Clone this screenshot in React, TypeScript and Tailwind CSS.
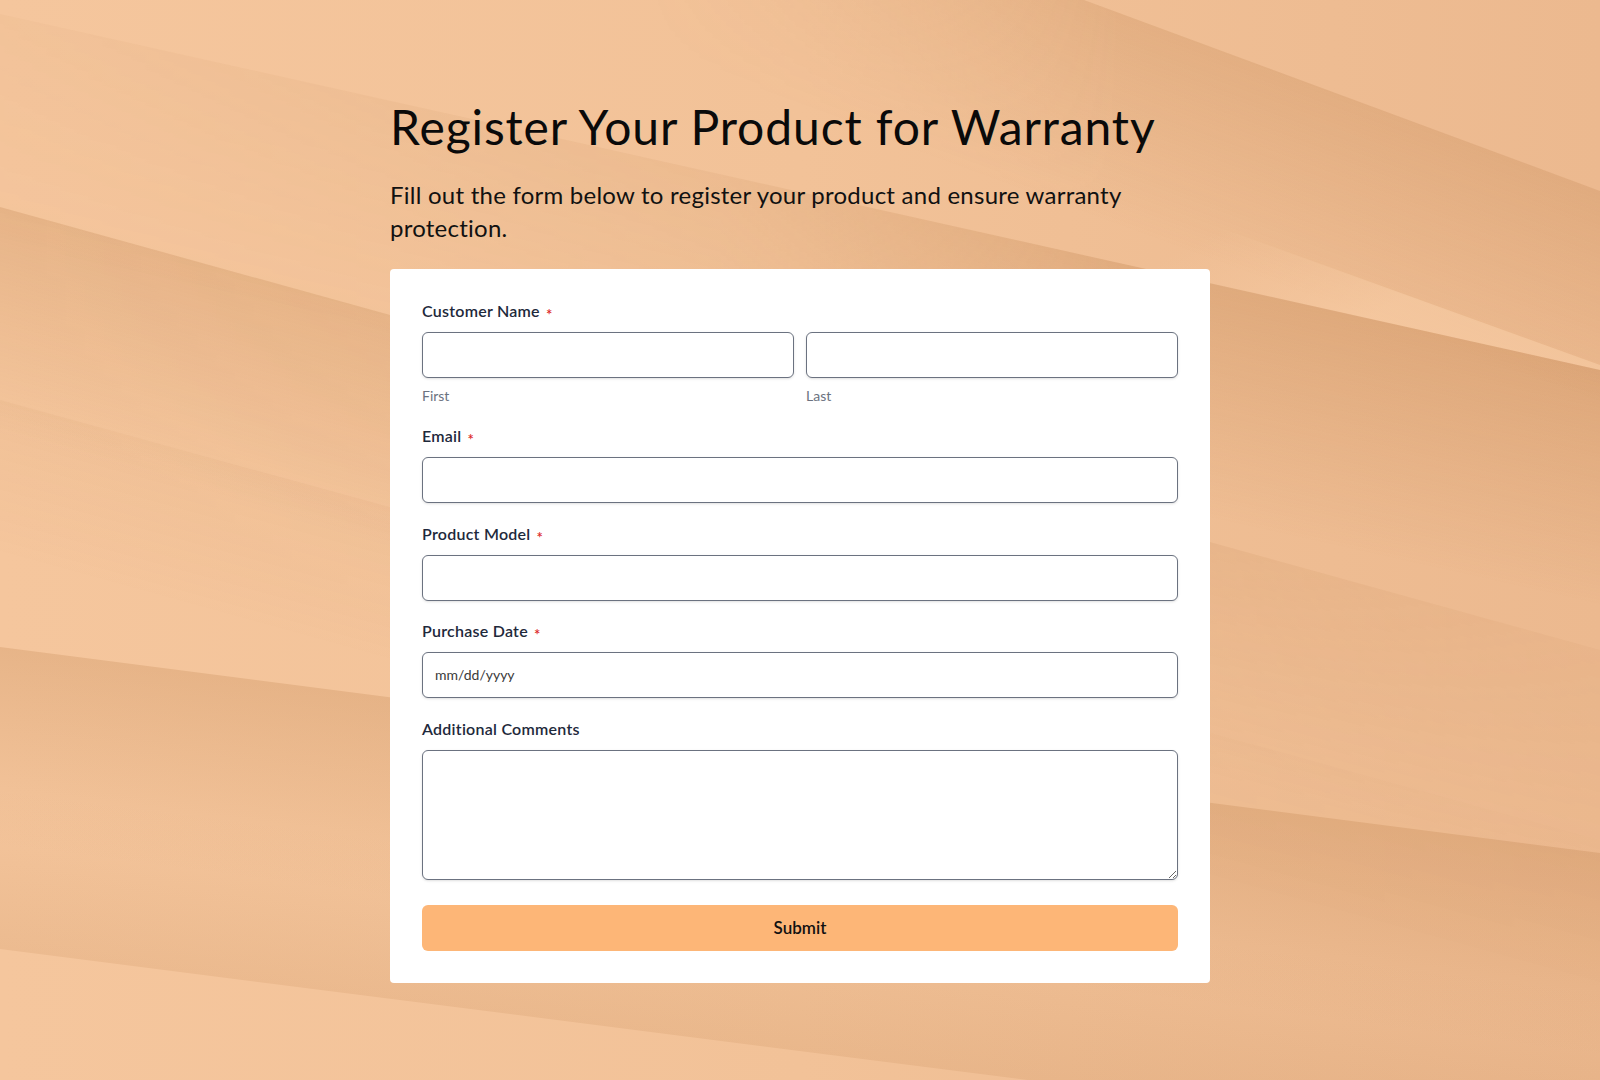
import React from "react";

function Background() {
  const dark = "#b5763f";
  return (
    <svg
      className="absolute inset-0 h-full w-full"
      viewBox="0 0 1600 1080"
      preserveAspectRatio="none"
      aria-hidden="true"
    >
      <defs>
        <linearGradient id="base" x1="0" y1="0" x2="1600" y2="0" gradientUnits="userSpaceOnUse">
          <stop offset="0" stopColor="#f5c69d" />
          <stop offset="0.5" stopColor="#f2c298" />
          <stop offset="1" stopColor="#ecb98f" />
        </linearGradient>
        <linearGradient id="fadeLeft" x1="0" y1="0" x2="1600" y2="0" gradientUnits="userSpaceOnUse">
          <stop offset="0" stopColor="#fff" stopOpacity="0.15" />
          <stop offset="0.45" stopColor="#fff" stopOpacity="0.35" />
          <stop offset="0.72" stopColor="#fff" stopOpacity="1" />
          <stop offset="1" stopColor="#fff" stopOpacity="1" />
        </linearGradient>
        <linearGradient id="fadeRightSoft" x1="0" y1="0" x2="1600" y2="0" gradientUnits="userSpaceOnUse">
          <stop offset="0" stopColor="#fff" stopOpacity="1" />
          <stop offset="0.3" stopColor="#fff" stopOpacity="0.9" />
          <stop offset="1" stopColor="#fff" stopOpacity="0.25" />
        </linearGradient>
        <linearGradient id="fadeTR" x1="0" y1="0" x2="1600" y2="0" gradientUnits="userSpaceOnUse">
          <stop offset="0.4" stopColor="#fff" stopOpacity="0" />
          <stop offset="0.7" stopColor="#fff" stopOpacity="1" />
          <stop offset="1" stopColor="#fff" stopOpacity="1" />
        </linearGradient>
        <mask id="mLeft" maskUnits="userSpaceOnUse" x="0" y="0" width="1600" height="1080">
          <rect x="0" y="0" width="1600" height="1080" fill="url(#fadeLeft)" />
        </mask>
        <mask id="mRight" maskUnits="userSpaceOnUse" x="0" y="0" width="1600" height="1080">
          <rect x="0" y="0" width="1600" height="1080" fill="url(#fadeRightSoft)" />
        </mask>
        <mask id="mTR" maskUnits="userSpaceOnUse" x="0" y="0" width="1600" height="1080">
          <rect x="0" y="0" width="1600" height="1080" fill="url(#fadeTR)" />
        </mask>
        <linearGradient id="g1" x1="1342" y1="95" x2="1273" y2="283" gradientUnits="userSpaceOnUse">
          <stop offset="0" stopColor={dark} stopOpacity="0.2" />
          <stop offset="1" stopColor={dark} stopOpacity="0" />
        </linearGradient>
        <linearGradient id="g2" x1="1400" y1="325" x2="1350" y2="550" gradientUnits="userSpaceOnUse">
          <stop offset="0" stopColor={dark} stopOpacity="0.26" />
          <stop offset="1" stopColor={dark} stopOpacity="0" />
        </linearGradient>
        <linearGradient id="g2l" x1="1400" y1="300" x2="1330" y2="170" gradientUnits="userSpaceOnUse">
          <stop offset="0" stopColor="#fbd2ab" stopOpacity="0.5" />
          <stop offset="1" stopColor="#fbd2ab" stopOpacity="0" />
        </linearGradient>
        <linearGradient id="g3" x1="200" y1="262" x2="141" y2="474" gradientUnits="userSpaceOnUse">
          <stop offset="0" stopColor={dark} stopOpacity="0.22" />
          <stop offset="1" stopColor={dark} stopOpacity="0" />
        </linearGradient>
        <linearGradient id="g4" x1="200" y1="455" x2="160" y2="600" gradientUnits="userSpaceOnUse">
          <stop offset="0" stopColor={dark} stopOpacity="0.06" />
          <stop offset="1" stopColor={dark} stopOpacity="0" />
        </linearGradient>
        <linearGradient id="g5" x1="800" y1="750" x2="774" y2="948" gradientUnits="userSpaceOnUse">
          <stop offset="0" stopColor={dark} stopOpacity="0.22" />
          <stop offset="1" stopColor={dark} stopOpacity="0" />
        </linearGradient>
        <linearGradient id="g6" x1="800" y1="1051" x2="820" y2="892" gradientUnits="userSpaceOnUse">
          <stop offset="0" stopColor={dark} stopOpacity="0.14" />
          <stop offset="1" stopColor={dark} stopOpacity="0" />
        </linearGradient>
      </defs>
      <rect x="0" y="0" width="1600" height="1080" fill="url(#base)" />
      {/* top right plane below line L1 */}
      <g mask="url(#mTR)">
        <polygon points="400,0 1084,0 1600,191 1600,480 400,200" fill="url(#g1)" />
      </g>
      {/* light sliver above L2 on the right */}
      <polygon points="1050,166 1600,365 1600,370 1050,248" fill="url(#g2l)" />
      {/* long plane below L2 */}
      <g mask="url(#mLeft)">
        <polygon points="0,14 1600,370 1600,720 0,364" fill="url(#g2)" />
      </g>
      {/* plane below L3 */}
      <g mask="url(#mRight)">
        <polygon points="0,207 1600,650 1600,900 0,457" fill="url(#g3)" />
        <polygon points="0,400 1600,840 1600,1000 0,560" fill="url(#g4)" />
      </g>
      {/* plane below L5 */}
      <polygon points="0,647 1600,853 1600,1080 0,897" fill="url(#g5)" />
      {/* fold above L6 */}
      <polygon points="0,790 1600,994 1600,1153 0,949" fill="url(#g6)" />
    </svg>
  );
}

function Req() {
  return (
    <span className="relative top-[4px] ml-[6px] text-[15px] leading-none text-[#dc2626]">*</span>
  );
}

function Label({ children, required }: { children: React.ReactNode; required?: boolean }) {
  return (
    <div className="mb-[11px] flex items-center text-[16px] leading-[20px] font-semibold tracking-[0.25px] text-[#1e293b]">
      <span>{children}</span>
      {required && <Req />}
    </div>
  );
}

const inputCls =
  "block h-[46px] w-full rounded-md border border-[#6b7280] bg-white px-3 text-[14px] text-[#1f2937] shadow-sm outline-none";

export default function App() {
  return (
    <div
      className="relative min-h-screen w-full overflow-hidden"
      style={{ fontFamily: "Lato, 'Noto Sans', 'Liberation Sans', sans-serif" }}
    >
      <Background />
      <div className="relative mx-auto w-[820px] pt-[98px] pb-[97px]">
        <h1 className="mb-[22px] text-[48px] leading-[1.2] font-normal tracking-[0.9px] text-[#0a0a0a]">
          Register Your Product for Warranty
        </h1>
        <p className="mb-[24px] text-[24px] leading-[1.4] tracking-[0.24px] text-[#111111]">
          Fill out the form below to register your product and ensure warranty protection.
        </p>
        <form className="rounded bg-white p-8" onSubmit={(e) => e.preventDefault()}>
          <div>
            <Label required>Customer Name</Label>
            <div className="grid grid-cols-2 gap-3">
              <div>
                <input type="text" className={inputCls} />
                <div className="mt-2 text-[14px] leading-[20px] text-[#6b7280]">First</div>
              </div>
              <div>
                <input type="text" className={inputCls} />
                <div className="mt-2 text-[14px] leading-[20px] text-[#6b7280]">Last</div>
              </div>
            </div>
          </div>
          <div className="mt-[20px]">
            <Label required>Email</Label>
            <input type="email" className={inputCls} />
          </div>
          <div className="mt-[21px]">
            <Label required>Product Model</Label>
            <input type="text" className={inputCls} />
          </div>
          <div className="mt-[20px]">
            <Label required>Purchase Date</Label>
            <input
              type="text"
              placeholder="mm/dd/yyyy"
              className={inputCls + " placeholder:text-[#3a3a3a]"}
            />
          </div>
          <div className="mt-[21px]">
            <Label>Additional Comments</Label>
            <textarea className="block h-[130px] w-full rounded-md border border-[#6b7280] bg-white px-3 py-2 text-[14px] shadow-sm outline-none" />
          </div>
          <button
            type="submit"
            className="mt-[25px] flex h-[46px] w-full items-center justify-center rounded-md bg-[#fdb677] text-[17px] font-semibold text-[#111111]"
          >
            Submit
          </button>
        </form>
      </div>
    </div>
  );
}
